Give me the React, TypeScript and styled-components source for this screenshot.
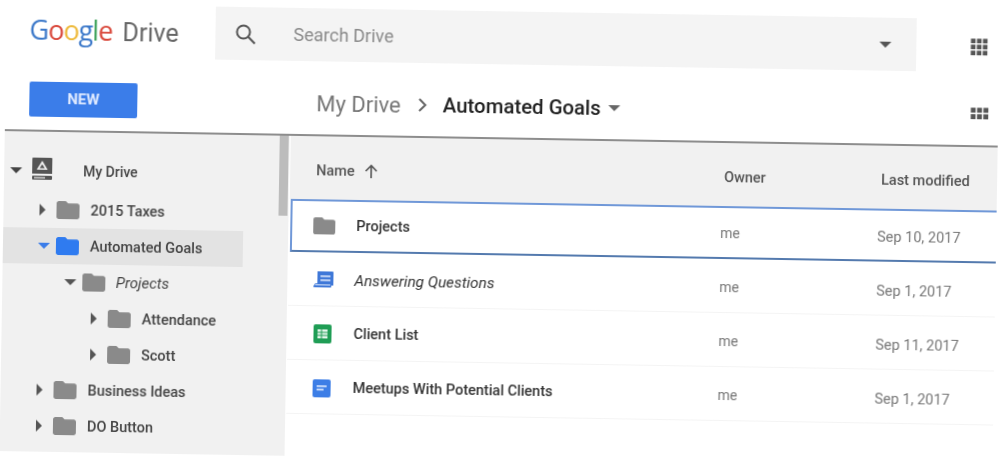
import styled, { createGlobalStyle } from "styled-components";

const GlobalStyle = createGlobalStyle`
  html, body {
    margin: 0;
    height: 471px;
    overflow: hidden;
    background: #fff;
  }
`;

// the whole screenshot sits about one degree off level
const Page = styled.div`
  width: 1000px;
  height: 471px;
  box-sizing: border-box;
  padding-left: 7px;
  transform: rotate(0.95deg);
  transform-origin: 0 0;
  filter: blur(0.35px);
  font-family: Roboto, "Liberation Sans", sans-serif;
  color: #444;
`;

const TopBar = styled.header`
  display: flex;
  align-items: flex-start;
  width: 993px;
  height: 61px;
  padding-top: 3px;
  box-sizing: border-box;
`;

const Logo = styled.div`
  display: flex;
  align-items: baseline;
  width: 209px;
  height: 53px;
  padding: 7px 0 0 23px;
  box-sizing: border-box;
  font-family: "Open Sans", sans-serif;
`;

const GoogleWord = styled.span`
  font-size: 27px;
  letter-spacing: -1px;
  width: 93px;
`;

const Letter = styled.span<{ $color: string }>`
  color: ${(p) => p.$color};
`;

const DriveWord = styled.span`
  font-family: Roboto, sans-serif;
  font-size: 25px;
  color: #666;
`;

const SearchBox = styled.div`
  display: flex;
  align-items: center;
  width: 701px;
  height: 53px;
  background: #f4f4f4;
  padding-left: 20px;
  box-sizing: border-box;
  color: #444;
`;

const SearchText = styled.span`
  flex: 1;
  margin-left: 38px;
  font-size: 18px;
  color: #8a8a8a;
`;

const SearchCaret = styled.span`
  margin-right: 25px;
  color: #555;
  display: flex;
`;

const GridButton = styled.div`
  margin: 19px 0 0 54px;
  display: flex;
  color: #555;
`;

const ToolBar = styled.div`
  display: flex;
  align-items: flex-start;
  width: 993px;
  height: 70px;
  box-sizing: border-box;
  border-bottom: 2px solid #8d8d8d;
`;

const NewButton = styled.button`
  width: 108px;
  height: 35px;
  margin: 20px 0 0 24px;
  border: 0;
  border-radius: 2px;
  background: #3b7de9;
  color: #dfeaff;
  font: 700 15px Roboto, sans-serif;
  padding: 0 0 2px;
`;

const Crumbs = styled.div`
  display: flex;
  align-items: center;
  height: 36px;
  margin: 19px 0 0 179px;
  flex: 1;
`;

const CrumbRoot = styled.span`
  font-size: 22px;
  color: #777;
`;

const CrumbChevron = styled.span`
  display: flex;
  margin: 0 16px 0 16px;
  color: #666;
`;

const CrumbCurrent = styled.span`
  font-size: 20.4px;
  font-weight: 500;
  color: #222;
`;

const CrumbCaret = styled.span`
  display: flex;
  margin-left: 7px;
  color: #666;
`;

const ViewButton = styled.div`
  display: flex;
  margin: 30px 9px 0 0;
  color: #555;
`;

const Body = styled.div`
  display: flex;
  gap: 1px;
  width: 993px;
`;

const Sidebar = styled.nav`
  position: relative;
  width: 285px;
  height: 320px;
  padding-top: 21px;
  box-sizing: border-box;
  background: #f1f1f1;
`;

const ScrollThumb = styled.div`
  position: absolute;
  top: 0;
  right: 1px;
  width: 9px;
  height: 80px;
  background: #bcbcbc;
`;

const TreeRoot = styled.div`
  display: flex;
  align-items: center;
  height: 36px;
  margin-bottom: 3px;
  padding-left: 6px;
  font-size: 14px;
  font-weight: 500;
`;

const TreeRootLabel = styled.span`
  margin-left: 31px;
`;

const TreeIcon = styled.span`
  display: flex;
  margin: -4px 0 0 10px;
`;

const TreeRow = styled.div<{ $level: number; $active?: boolean }>`
  display: flex;
  align-items: center;
  width: 240px;
  height: 36px;
  padding-left: ${(p) => 35 + p.$level * 26.5}px;
  box-sizing: border-box;
  background: ${(p) => (p.$active ? "#e3e3e3" : "transparent")};
  font-size: 14.5px;
  font-weight: 500;
  white-space: nowrap;
`;

const CaretCell = styled.span<{ $color?: string }>`
  display: flex;
  width: 18px;
  color: ${(p) => p.$color || "#555"};
`;

const TreeLabel = styled.span<{ $italic?: boolean }>`
  margin-left: 11px;
  font-size: ${(p) => (p.$italic ? 15 : 14.5)}px;
  font-style: ${(p) => (p.$italic ? "italic" : "normal")};
  font-weight: ${(p) => (p.$italic ? 400 : 500)};
`;

const Main = styled.main`
  flex: 1;
`;

const TableHead = styled.div`
  display: grid;
  grid-template-columns: 434px 157px 1fr;
  align-items: center;
  height: 63px;
  padding-top: 5px;
  box-sizing: border-box;
  background: #f1f1f1;
  font-size: 14.5px;
  font-weight: 500;
  color: #555;
`;

const HeadCell = styled.div<{ $pad: number }>`
  display: flex;
  align-items: center;
  gap: 9px;
  padding-left: ${(p) => p.$pad}px;
  white-space: nowrap;
`;

const Row = styled.div<{ $selected?: boolean }>`
  display: grid;
  grid-template-columns: ${(p) => (p.$selected ? 428 : 431)}px 157px 1fr;
  align-items: center;
  height: ${(p) => (p.$selected ? 53 : 54)}px;
  padding-top: ${(p) => (p.$selected ? 0 : 2)}px;
  box-sizing: border-box;
  border-bottom: 1px solid #f4f4f4;
  ${(p) =>
    p.$selected &&
    `
    margin-left: 1px;
    border: 2px solid #7098d8;
    border-right: 0;
    border-bottom-color: #547aae;
  `}
`;

const NameCell = styled.div<{ $selected?: boolean }>`
  display: flex;
  align-items: center;
  padding-left: ${(p) => (p.$selected ? 21 : 24)}px;
  font-size: 14.5px;
  font-weight: 500;
  color: #333;
`;

const IconSlot = styled.span<{ $selected?: boolean }>`
  display: flex;
  justify-content: center;
  width: 22px;
  margin-right: ${(p) => (p.$selected ? 21 : 20)}px;
`;

const FileName = styled.span<{ $italic?: boolean }>`
  font-size: ${(p) => (p.$italic ? 15.3 : 14.5)}px;
  font-style: ${(p) => (p.$italic ? "italic" : "normal")};
  font-weight: ${(p) => (p.$italic ? 400 : 500)};
`;

const OwnerCell = styled.div`
  font-size: 14px;
  color: #777;
`;

const DateCell = styled.div`
  margin-top: 3px;
  font-size: 14.5px;
  color: #777;
  white-space: nowrap;
`;

const Folder = ({ color = "#8a8a8a", w = 23, h = 18 }: { color?: string; w?: number; h?: number }) => (
  <svg width={w} height={h} viewBox="2 4 20 16" preserveAspectRatio="none" fill={color}>
    <path d="M10 4H4c-1.1 0-2 .9-2 2v12c0 1.1.9 2 2 2h16c1.1 0 2-.9 2-2V8c0-1.1-.9-2-2-2h-8l-2-2z" />
  </svg>
);

const CaretDown = ({ w = 12, h = 6 }: { w?: number; h?: number }) => (
  <svg width={w} height={h} viewBox="0 0 12 6" preserveAspectRatio="none" fill="currentColor">
    <path d="M0 0h12L6 6z" />
  </svg>
);

const CaretRight = () => (
  <svg width="8" height="12" viewBox="0 0 8 12" fill="currentColor">
    <path d="M1 0l6 6-6 6z" />
  </svg>
);

const Dots = ({ w, h, cols }: { w: number; h: number; cols: number }) => (
  <svg width={w} height={h} viewBox={`0 0 ${cols * 6} ${h > 14 ? 18 : 12}`} preserveAspectRatio="none" fill="currentColor">
    {Array.from({ length: cols * (h > 14 ? 3 : 2) }).map((_, i) => (
      <rect key={i} x={(i % cols) * 6 + 0.5} y={Math.floor(i / cols) * 6 + 0.5} width="4.6" height="4.6" />
    ))}
  </svg>
);

const DriveIcon = () => (
  <svg width="20" height="22" viewBox="0 0 20 22">
    <path d="M1 0h18a1 1 0 0 1 1 1v15H0V1a1 1 0 0 1 1-1z" fill="#555" />
    <path d="M10 3l5.5 9h-11z" fill="#f1f1f1" />
    <path d="M10 6.5l2.6 4H7.4z" fill="#555" />
    <rect y="18" width="20" height="4" rx="1" fill="#555" />
    <rect x="2" y="19.4" width="11" height="1.2" fill="#f1f1f1" />
  </svg>
);

const SlidesIcon = () => (
  <svg width="20" height="18" viewBox="0 0 20 18">
    <path d="M4 0h15a1 1 0 0 1 1 1v13H4z" fill="#3f78d8" />
    <path d="M2 12h16v3a1 1 0 0 1-1 1H1a1 1 0 0 1-1-1l2-3z" fill="#3f78d8" />
    <rect x="7" y="4" width="10" height="1.6" fill="#dbe6fa" />
    <rect x="7" y="8" width="10" height="1.6" fill="#dbe6fa" />
    <rect x="2" y="13" width="15" height="1" fill="#dbe6fa" />
  </svg>
);

const SheetIcon = () => (
  <svg width="18" height="19" viewBox="0 0 18 19">
    <rect width="18" height="19" rx="2" fill="#1f9d55" />
    <rect x="4" y="5" width="10" height="9" fill="#e6f6ec" />
    <path d="M4 8h10M4 11h10M8 5v9" stroke="#1f9d55" strokeWidth="1" />
  </svg>
);

const DocIcon = () => (
  <svg width="18" height="18" viewBox="0 0 18 18">
    <rect width="18" height="18" rx="2" fill="#3d7ee6" />
    <rect x="4" y="6" width="10" height="1.6" fill="#e3edff" />
    <rect x="4" y="9.5" width="7" height="1.6" fill="#e3edff" />
  </svg>
);

const SearchIcon = () => (
  <svg width="20" height="20" viewBox="0 0 20 20" fill="none" stroke="#555" strokeWidth="2">
    <circle cx="8" cy="8" r="6.5" />
    <path d="M12.8 12.8L19.5 19.5" />
  </svg>
);

const Chevron = () => (
  <svg width="10" height="14" viewBox="0 0 10 14" fill="none" stroke="currentColor" strokeWidth="2">
    <path d="M2 1l6 6-6 6" />
  </svg>
);

const SortArrow = () => (
  <svg width="14" height="14" viewBox="0 0 14 14" fill="none" stroke="#555" strokeWidth="1.6">
    <path d="M7 14V2M1.5 7L7 1.5 12.5 7" />
  </svg>
);

const googleLetters: [string, string][] = [
  ["G", "#3b78c9"],
  ["o", "#d9483b"],
  ["o", "#eeb93a"],
  ["g", "#3b78c9"],
  ["l", "#3fa25a"],
  ["e", "#d9483b"],
];

const tree = [
  { name: "2015 Taxes", level: 0, open: false },
  { name: "Automated Goals", level: 0, open: true, active: true },
  { name: "Projects", level: 1, open: true, italic: true },
  { name: "Attendance", level: 2, open: false },
  { name: "Scott", level: 2, open: false },
  { name: "Business Ideas", level: 0, open: false },
  { name: "DO Button", level: 0, open: false },
];

const files = [
  { name: "Answering Questions", date: "Sep 1, 2017", icon: <SlidesIcon />, italic: true },
  { name: "Client List", date: "Sep 11, 2017", icon: <SheetIcon /> },
  { name: "Meetups With Potential Clients", date: "Sep 1, 2017", icon: <DocIcon /> },
];

export default function App() {
  return (
    <>
      <GlobalStyle />
      <Page>
        <TopBar>
          <Logo>
            <GoogleWord>
              {googleLetters.map(([l, c], i) => (
                <Letter key={i} $color={c}>
                  {l}
                </Letter>
              ))}
            </GoogleWord>
            <DriveWord>Drive</DriveWord>
          </Logo>
          <SearchBox>
            <SearchIcon />
            <SearchText>Search Drive</SearchText>
            <SearchCaret>
              <CaretDown />
            </SearchCaret>
          </SearchBox>
          <GridButton>
            <Dots w={18} h={18} cols={3} />
          </GridButton>
        </TopBar>

        <ToolBar>
          <NewButton>NEW</NewButton>
          <Crumbs>
            <CrumbRoot>My Drive</CrumbRoot>
            <CrumbChevron>
              <Chevron />
            </CrumbChevron>
            <CrumbCurrent>Automated Goals</CrumbCurrent>
            <CrumbCaret>
              <CaretDown />
            </CrumbCaret>
          </Crumbs>
          <ViewButton>
            <Dots w={19} h={13} cols={3} />
          </ViewButton>
        </ToolBar>

        <Body>
          <Sidebar>
            <ScrollThumb />
            <TreeRoot>
              <CaretDown />
              <TreeIcon>
                <DriveIcon />
              </TreeIcon>
              <TreeRootLabel>My Drive</TreeRootLabel>
            </TreeRoot>
            {tree.map((t) => (
              <TreeRow key={t.name} $level={t.level} $active={t.active}>
                <CaretCell $color={t.active ? "#3b7de9" : undefined}>
                  {t.open ? <CaretDown /> : <CaretRight />}
                </CaretCell>
                <Folder color={t.active ? "#2f7bf0" : "#8a8a8a"} />
                <TreeLabel $italic={t.italic}>{t.name}</TreeLabel>
              </TreeRow>
            ))}
          </Sidebar>

          <Main>
            <TableHead>
              <HeadCell $pad={26}>
                Name <SortArrow />
              </HeadCell>
              <HeadCell $pad={0}>Owner</HeadCell>
              <HeadCell $pad={0}>Last modified</HeadCell>
            </TableHead>
            <Row $selected>
              <NameCell $selected>
                <IconSlot $selected>
                  <Folder w={22} h={17} />
                </IconSlot>
                <FileName>Projects</FileName>
              </NameCell>
              <OwnerCell>me</OwnerCell>
              <DateCell>Sep 10, 2017</DateCell>
            </Row>
            {files.map((f) => (
              <Row key={f.name}>
                <NameCell>
                  <IconSlot>{f.icon}</IconSlot>
                  <FileName $italic={f.italic}>{f.name}</FileName>
                </NameCell>
                <OwnerCell>me</OwnerCell>
                <DateCell>{f.date}</DateCell>
              </Row>
            ))}
          </Main>
        </Body>
      </Page>
    </>
  );
}
